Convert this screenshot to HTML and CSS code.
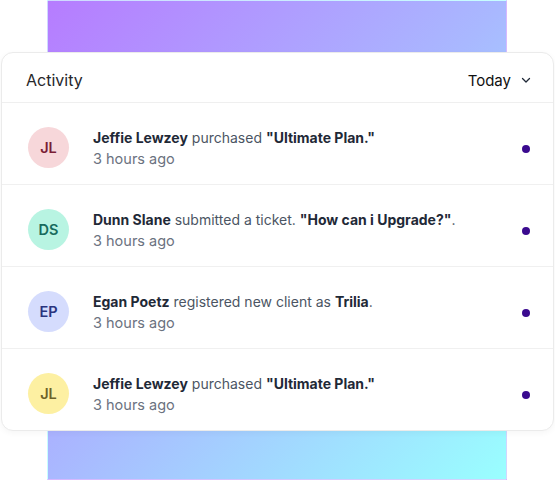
FILE: index.html
```html
<!DOCTYPE html>
<html lang="en">
<head>
<meta charset="utf-8">
<link rel="stylesheet" href="styles.css">
</head>
<body>
<div class="stage">
  <div class="backdrop"></div>
  <div class="card">
    <div class="card-head">
      <span class="title">Activity</span>
      <span class="filter">Today
        <svg width="10" height="10" viewBox="0 0 10 10"><path d="M1.5 3.5 L5 7 L8.5 3.5" fill="none" stroke="#1f2937" stroke-width="1.3" stroke-linecap="round" stroke-linejoin="round"/></svg>
      </span>
    </div>
    <div class="row">
      <div class="avatar av-pink">JL</div>
      <div class="body">
        <div class="line"><b>Jeffie Lewzey</b> purchased <b>"Ultimate Plan."</b></div>
        <div class="time">3 hours ago</div>
      </div>
      <span class="dot"></span>
    </div>
    <div class="row">
      <div class="avatar av-mint">DS</div>
      <div class="body">
        <div class="line"><b>Dunn Slane</b> submitted a ticket. <b>"How can i Upgrade?"</b>.</div>
        <div class="time">3 hours ago</div>
      </div>
      <span class="dot"></span>
    </div>
    <div class="row">
      <div class="avatar av-blue">EP</div>
      <div class="body">
        <div class="line"><b>Egan Poetz</b> registered new client as <b>Trilia</b>.</div>
        <div class="time">3 hours ago</div>
      </div>
      <span class="dot"></span>
    </div>
    <div class="row">
      <div class="avatar av-yellow">JL</div>
      <div class="body">
        <div class="line"><b>Jeffie Lewzey</b> purchased <b>"Ultimate Plan."</b></div>
        <div class="time">3 hours ago</div>
      </div>
      <span class="dot"></span>
    </div>
  </div>
</div>
</body>
</html>
```
FILE: styles.css
```css
* { box-sizing: border-box; }
html, body { margin: 0; padding: 0; background: #fff; }
body { font-family: Inter, "Noto Sans", sans-serif; color: #1f2937; }
.stage { position: relative; width: 555px; height: 481px; padding-top: 52px; }
.backdrop {
  position: absolute; left: 47px; top: 0; width: 460px; height: 480px;
  background: linear-gradient(to bottom right, #b67cff 0%, #a9b8ff 50%, #99ffff 100%);
  border: 1px solid rgba(255,255,255,0.45);
}
.card {
  position: relative; margin: 0 1px; background: #fff;
  border: 1px solid #ebebeb; border-radius: 12px;
  box-shadow: 0 2px 6px rgba(0,0,0,0.04);
}
.card-head {
  height: 50px; display: flex; align-items: center; justify-content: space-between;
  padding: 5px 22px 0 24px; border-bottom: 1px solid #efefef;
}
.title { font-size: 16px; color: #27272a; }
.filter { font-size: 15px; color: #111; display: flex; align-items: center; gap: 10px; }
.row {
  display: flex; align-items: center; height: 82px;
  padding: 23px 23px 15px 26px; border-bottom: 1px solid #f0f0f0;
}
.row:last-child { border-bottom: none; height: 81px; }
.avatar {
  width: 41px; height: 41px; border-radius: 50%; flex: none;
  display: flex; align-items: center; justify-content: center;
  font-size: 14.5px; font-weight: 600;
}
.av-pink { background: #f7d7da; color: #7a1d36; }
.av-mint { background: #b8f4e2; color: #176b5d; }
.av-blue { background: #d5dcfd; color: #2a347f; }
.av-yellow { background: #fdf0a2; color: #6d6229; }
.body { flex: 1; margin-left: 24px; }
.line { font-size: 14px; line-height: 21px; color: #4b5563; }
.line b { font-weight: 700; color: #1f2937; }
.time { font-size: 14.5px; line-height: 21px; color: #6b7280; }
.dot { width: 8px; height: 8px; border-radius: 50%; background: #3a0a8f; flex: none; margin-top: 2px; }
```
